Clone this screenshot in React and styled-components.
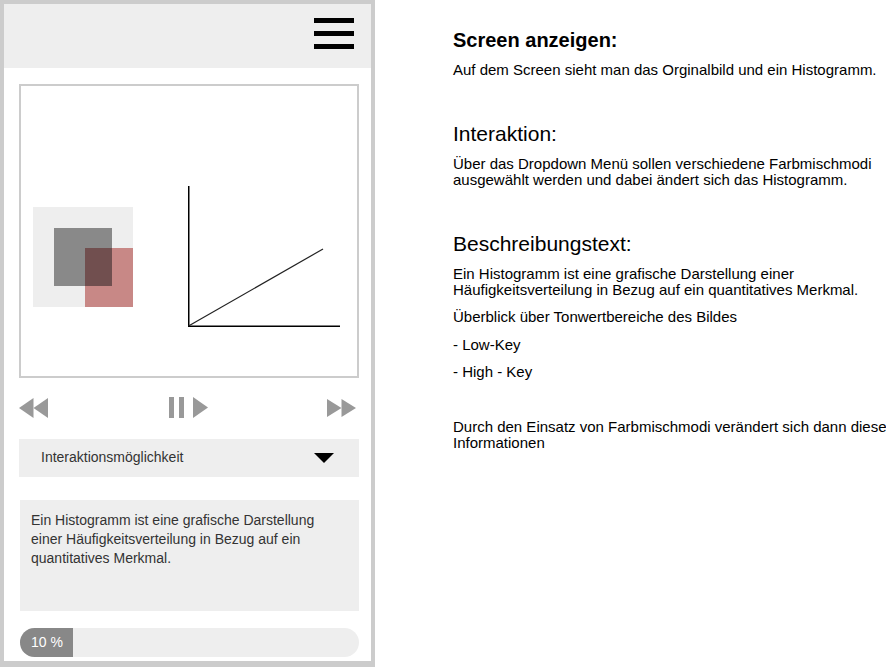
import React from 'react';
import styled, { createGlobalStyle } from 'styled-components';

const Global = createGlobalStyle`
  html, body { margin: 0; padding: 0; background: #ffffff; }
  body { font-family: "Liberation Sans", Arial, Helvetica, sans-serif; }
`;

const Page = styled.div`
  display: flex;
  width: 886px;
  height: 667px;
  overflow: hidden;
`;

const Phone = styled.div`
  box-sizing: border-box;
  flex: none;
  width: 375px;
  height: 667px;
  border: 4px solid #cccccc;
  border-bottom-width: 6px;
  display: flex;
  flex-direction: column;
  background: #ffffff;
`;

const Header = styled.header`
  box-sizing: border-box;
  height: 64px;
  background: #eeeeee;
  display: flex;
  justify-content: flex-end;
  padding: 14px 17px 0 0;
`;

const Burger = styled.div`
  display: flex;
  flex-direction: column;
  gap: 8px;
  width: 40px;
`;

const Bar = styled.span`
  display: block;
  height: 5px;
  background: #000000;
`;

const Content = styled.div`
  display: flex;
  flex-direction: column;
  padding: 16px 12px 0 15px;
`;

const Frame = styled.div`
  box-sizing: border-box;
  width: 340px;
  height: 294px;
  border: 2px solid #cccccc;
  padding: 100px 0 0 12px;
`;

const FigureRow = styled.div`
  display: flex;
  align-items: center;
  gap: 55px;
`;

const Controls = styled.div`
  display: flex;
  justify-content: space-between;
  align-items: center;
  height: 21px;
  margin-top: 19px;
  padding-right: 3px;
`;

const PlayGroup = styled.div`
  display: flex;
  align-items: center;
  margin-left: 2px;
`;

const PauseBar = styled.span`
  display: block;
  width: 5px;
  height: 21px;
  background: #999999;
  margin-right: ${(p) => p.$gap}px;
`;

const Dropdown = styled.div`
  box-sizing: border-box;
  height: 38px;
  margin-top: 21px;
  background: #eeeeee;
  display: flex;
  align-items: center;
  justify-content: space-between;
  padding: 0 25px 2px 22px;
  font-size: 14px;
  color: #333333;
`;

const CaretBox = styled.span`
  display: flex;
  padding-top: 2px;
`;

const TextBox = styled.div`
  box-sizing: border-box;
  height: 111px;
  margin: 23px 0 0 1px;
  background: #eeeeee;
  padding: 11px 11px 0 11px;
  font-size: 14px;
  line-height: 19px;
  color: #333333;
`;

const Progress = styled.div`
  height: 29px;
  margin: 17px 0 0 1px;
  border-radius: 15px;
  background: #eeeeee;
  overflow: hidden;
  display: flex;
`;

const Fill = styled.div`
  box-sizing: border-box;
  height: 100%;
  background: #888888;
  color: #ffffff;
  font-size: 14px;
  line-height: 28px;
  padding-left: 11px;
  white-space: nowrap;
`;

const Notes = styled.div`
  flex: none;
  width: 440px;
  margin-left: 78px;
  padding-top: 29px;
  color: #000000;
`;

const Title = styled.h2`
  margin: 0;
  font-size: 20px;
  line-height: 23px;
  font-weight: bold;
`;

const Heading = styled.h3`
  margin: 44px 0 0 0;
  font-size: 21px;
  line-height: 24px;
  font-weight: normal;
`;

const Para = styled.p`
  margin: ${(p) => p.$top}px 0 0 0;
  font-size: 15px;
  line-height: 16px;
`;

const Rewind = () => (
  <svg width="29" height="20" viewBox="0 0 29 20">
    <polygon points="14.5,0 0,10 14.5,20" fill="#999999" />
    <polygon points="29,0 14.5,10 29,20" fill="#999999" />
  </svg>
);

const Forward = () => (
  <svg width="29" height="18" viewBox="0 0 29 18">
    <polygon points="0,0 14.5,9 0,18" fill="#999999" />
    <polygon points="14.5,0 29,9 14.5,18" fill="#999999" />
  </svg>
);

const PlayTri = () => (
  <svg width="15" height="21" viewBox="0 0 15 21">
    <polygon points="0,0 15,10.5 0,21" fill="#999999" />
  </svg>
);

const Caret = () => (
  <svg width="20" height="10" viewBox="0 0 20 10">
    <polygon points="0,0 20,0 10,10" fill="#000000" />
  </svg>
);

const Picture = () => (
  <svg width="100" height="100" viewBox="0 0 100 100">
    <rect x="0" y="0" width="100" height="100" fill="#eeeeee" />
    <rect x="21" y="21" width="58" height="58" fill="#898989" />
    <rect x="52" y="41" width="48" height="59" fill="#c88886" />
    <rect x="52" y="41" width="27" height="38" fill="#714f4f" />
  </svg>
);

const Chart = () => (
  <svg width="152" height="141" viewBox="0 0 152 141">
    <line x1="0.75" y1="0" x2="0.75" y2="141" stroke="#000" strokeWidth="1.5" />
    <line x1="0" y1="140.25" x2="152" y2="140.25" stroke="#000" strokeWidth="1.5" />
    <line x1="0.5" y1="140" x2="135" y2="63" stroke="#222" strokeWidth="1.2" />
  </svg>
);

export default function App() {
  return (
    <>
      <Global />
      <Page>
        <Phone>
          <Header>
            <Burger>
              <Bar />
              <Bar />
              <Bar />
            </Burger>
          </Header>
          <Content>
            <Frame>
              <FigureRow>
                <Picture />
                <Chart />
              </FigureRow>
            </Frame>
            <Controls>
              <Rewind />
              <PlayGroup>
                <PauseBar $gap={5} />
                <PauseBar $gap={9} />
                <PlayTri />
              </PlayGroup>
              <Forward />
            </Controls>
            <Dropdown>
              <span>Interaktionsmöglichkeit</span>
              <CaretBox>
                <Caret />
              </CaretBox>
            </Dropdown>
            <TextBox>
              Ein Histogramm ist eine grafische Darstellung einer Häufigkeitsverteilung in Bezug auf ein
              quantitatives Merkmal.
            </TextBox>
            <Progress>
              <Fill style={{ width: '53px' }}>10 %</Fill>
            </Progress>
          </Content>
        </Phone>
        <Notes>
          <Title>Screen anzeigen:</Title>
          <Para $top={10}>Auf dem Screen sieht man das Orginalbild und ein Histogramm.</Para>
          <Heading>Interaktion:</Heading>
          <Para $top={10}>
            Über das Dropdown Menü sollen verschiedene Farbmischmodi ausgewählt werden und dabei ändert sich das
            Histogramm.
          </Para>
          <Heading>Beschreibungstext:</Heading>
          <Para $top={10}>
            Ein Histogramm ist eine grafische Darstellung einer Häufigkeitsverteilung in Bezug auf ein quantitatives
            Merkmal.
          </Para>
          <Para $top={11}>Überblick über Tonwertbereiche des Bildes</Para>
          <Para $top={12}>- Low-Key</Para>
          <Para $top={11}>- High - Key</Para>
          <Para $top={39}>Durch den Einsatz von Farbmischmodi verändert sich dann diese Informationen</Para>
        </Notes>
      </Page>
    </>
  );
}
